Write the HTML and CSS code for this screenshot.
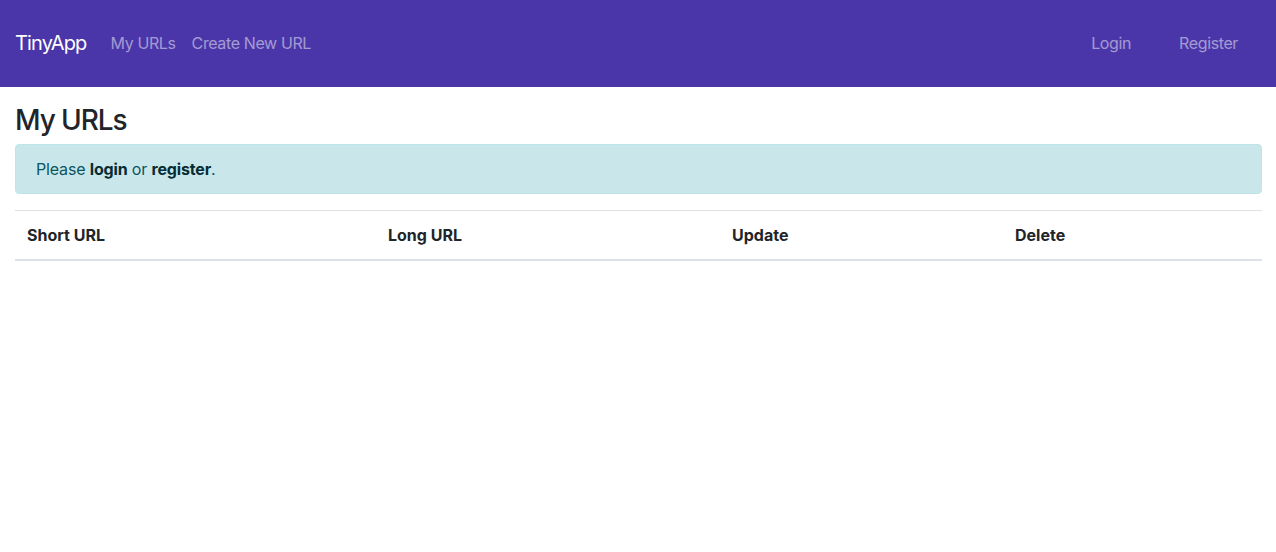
FILE: index.html
```html
<!DOCTYPE html>
<html lang="en">
<head>
<meta charset="utf-8">
<title>TinyApp</title>
<link rel="stylesheet" href="styles.css">
</head>
<body>
<nav class="navbar">
  <a class="brand" href="#">TinyApp</a>
  <ul class="nav">
    <li><a class="nav-link" href="#">My URLs</a></li>
    <li><a class="nav-link" href="#">Create New URL</a></li>
  </ul>
  <ul class="nav nav-right">
    <li><a class="nav-link wide" href="#">Login</a></li>
    <li><a class="nav-link wide" href="#">Register</a></li>
  </ul>
</nav>
<main class="main">
  <h2 class="title">My URLs</h2>
  <div class="alert">Please <a class="alert-link" href="#">login</a> or <a class="alert-link" href="#">register</a>.</div>
  <table class="table">
    <thead>
      <tr>
        <th class="c1">Short URL</th>
        <th class="c2">Long URL</th>
        <th class="c3">Update</th>
        <th class="c4">Delete</th>
      </tr>
    </thead>
    <tbody></tbody>
  </table>
</main>
</body>
</html>
```
FILE: styles.css
```css
* { box-sizing: border-box; }
body {
  margin: 0;
  font-family: Inter, "Noto Sans", "Liberation Sans", sans-serif;
  font-size: 16px;
  line-height: 1.5;
  color: #212529;
  background: #fff;
}
a { text-decoration: none; }
.navbar {
  height: 87px;
  background: #4a36a8;
  display: flex;
  align-items: center;
  padding: 0 14px 2px 15px;
}
.brand {
  color: #fff;
  font-size: 20px;
  letter-spacing: -0.85px;
  margin-right: 16px;
  line-height: 1.5;
}
.nav {
  list-style: none;
  margin: 0;
  padding: 0;
  display: flex;
}
.nav-right { margin-left: auto; }
.nav-link {
  display: block;
  padding: 8px;
  letter-spacing: -0.38px;
  color: rgba(255, 255, 255, 0.5);
}
.nav-link.wide { padding: 8px 24px; }
.main { padding: 17px 14px 0 15px; }
.title {
  margin: 0 0 6px;
  font-size: 28px;
  font-weight: 500;
  letter-spacing: -1.1px;
  line-height: 1.2;
}
.alert {
  padding: 12px 20px;
  border: 1px solid #bee5eb;
  border-radius: 4px;
  background: #c9e7ea;
  color: #0c5460;
  letter-spacing: -0.16px;
  margin-bottom: 16px;
}
.alert-link { font-weight: 700; color: #062c33; }
.table {
  width: 100%;
  border-collapse: collapse;
}
.table th {
  text-align: left;
  padding: 12px;
  border-top: 1px solid #dee2e6;
  border-bottom: 2px solid #dee2e6;
  font-weight: 700;
}
.c1 { width: 361px; }
.c2 { width: 344px; }
.c3 { width: 283px; }
```
